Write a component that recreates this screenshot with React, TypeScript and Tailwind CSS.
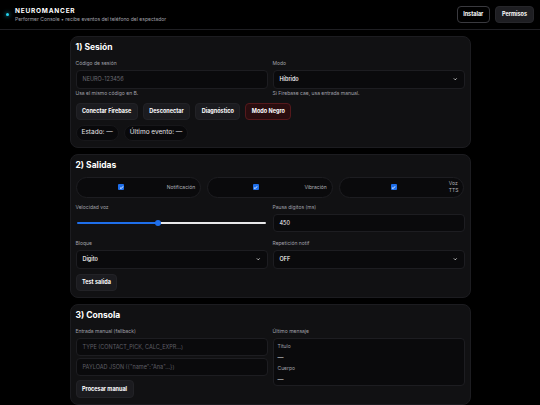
import { ChevronDown } from 'lucide-react'

const label = 'text-[5px] leading-[6px] text-[#a1a1aa]'
const field =
  'h-[19px] rounded-[4px] border border-[#1d1d21] bg-[#0a0a0c] px-[6px] flex items-center text-[5.5px]'
const btn =
  'h-[17px] px-[5.5px] rounded-[4px] border border-[#222226] bg-[#1b1b1f] text-[5.5px] font-bold text-white flex items-center'

function Card({ title, children }: { title: string; children: React.ReactNode }) {
  return (
    <section className="w-[401px] rounded-[8px] border border-[#1c1c20] bg-[#111113] px-[5px] pt-[5px] pb-[6px]">
      <h2 className="text-[8.5px] leading-[10px] font-bold text-white">{title}</h2>
      {children}
    </section>
  )
}

function FakeSelect({ value }: { value: string }) {
  return (
    <div className={`${field} justify-between font-medium text-white`}>
      <span>{value}</span>
      <ChevronDown className="w-[4.5px] h-[4.5px] text-white" strokeWidth={4} />
    </div>
  )
}

// checkbox toma el espacio libre, el texto se queda en su ancho mínimo
function Check({ text }: { text: string }) {
  return (
    <div className="h-[21.5px] rounded-full border border-[#1d1d21] bg-[#0a0a0c] pl-[2px] pr-[5px] flex items-center">
      <div className="flex-1 flex justify-center pr-[3px]">
        <span className="w-[6px] h-[6px] rounded-[1px] bg-[#1f6feb] flex items-center justify-center">
          <svg viewBox="0 0 10 10" className="w-[5px] h-[5px]">
            <path d="M2 5.2 L4.2 7.3 L8 2.8" stroke="white" strokeWidth="1.8" fill="none" />
          </svg>
        </span>
      </div>
      <span className="w-min text-[5px] leading-[7px] text-[#b4b4bb]">{text}</span>
    </div>
  )
}

export default function App() {
  return (
    <div className="min-h-screen bg-black text-white" style={{ fontFamily: 'Inter, "Noto Sans", sans-serif' }}>
      <header className="h-[30px] border-b border-[#1f1f23] flex items-center justify-between pl-[6px] pr-[6px]">
        <div className="flex items-center gap-[6px]">
          <span className="w-[3px] h-[3px] rounded-full bg-[#22d3ee] shadow-[0_0_4px_#22d3ee]" />
          <div>
            <div className="text-[6.5px] leading-[8px] font-bold tracking-[0.12em]">NEUROMANCER</div>
            <div className="text-[5px] leading-[6px] text-[#a1a1aa] mt-[1px]">
              Performer Console • recibe eventos del teléfono del espectador
            </div>
          </div>
        </div>
        <div className="flex gap-[5px]">
          <button className="h-[17px] px-[5.5px] rounded-[4px] border border-[#3a3a3f] bg-black text-[5.5px] font-bold">
            Instalar
          </button>
          <button className="h-[17px] px-[6px] rounded-[4px] border border-[#26262a] bg-[#1e1e22] text-[5.5px] font-bold">
            Permisos
          </button>
        </div>
      </header>

      <main className="flex flex-col items-center gap-[6px] pt-[6px]">
        <Card title="1) Sesión">
          <div className="mt-[8px] grid grid-cols-2 gap-x-[5px]">
            <div>
              <div className={label}>Código de sesión</div>
              <div className={`${field} mt-[4px] text-[#6b6b72]`}>NEURO-123456</div>
              <div className={`${label} mt-[0.5px]`}>Usa el mismo código en B.</div>
            </div>
            <div>
              <div className={label}>Modo</div>
              <div className="mt-[4px]">
                <FakeSelect value="Híbrido" />
              </div>
              <div className={`${label} mt-[0.5px]`}>Si Firebase cae, usa entrada manual.</div>
            </div>
          </div>
          <div className="mt-[7px] flex gap-[5px]">
            <button className={btn}>Conectar Firebase</button>
            <button className={btn}>Desconectar</button>
            <button className={btn}>Diagnóstico</button>
            <button className={`${btn} !bg-[#2a0d0f] !border-[#55191c]`}>Modo Negro</button>
          </div>
          <div className="mt-[5px] flex gap-[5px]">
            <span className="h-[16px] px-[5px] rounded-full border border-[#17171a] bg-[#09090b] flex items-center text-[6.5px] text-[#e4e4e7]">
              Estado: —
            </span>
            <span className="h-[16px] px-[5px] rounded-full border border-[#17171a] bg-[#09090b] flex items-center text-[6.5px] text-[#e4e4e7]">
              Último evento: —
            </span>
          </div>
        </Card>

        <Card title="2) Salidas">
          <div className="mt-[7px] grid grid-cols-3 gap-[6px]">
            <Check text="Notificación" />
            <Check text="Vibración" />
            <Check text="Voz TTS" />
          </div>
          <div className="mt-[6px] grid grid-cols-2 gap-x-[5px]">
            <div>
              <div className={label}>Velocidad voz</div>
              <div className="mt-[4px] h-[18px] flex items-center px-[1.5px]">
                <div className="relative w-full h-[2px] flex">
                  <div className="w-[43%] h-full bg-[#1f6feb] rounded-l-full" />
                  <div className="flex-1 h-full bg-[#e8e8ea] rounded-r-full" />
                  <span className="absolute left-[43%] top-1/2 -translate-x-1/2 -translate-y-1/2 w-[6px] h-[6px] rounded-full bg-[#1f6feb]" />
                </div>
              </div>
            </div>
            <div>
              <div className={label}>Pausa dígitos (ms)</div>
              <div className={`${field} mt-[4px] !h-[18px] text-white`}>450</div>
            </div>
          </div>
          <div className="mt-[8px] grid grid-cols-2 gap-x-[5px]">
            <div>
              <div className={label}>Bloque</div>
              <div className="mt-[4px]">
                <FakeSelect value="Dígito" />
              </div>
            </div>
            <div>
              <div className={label}>Repetición notif</div>
              <div className="mt-[4px]">
                <FakeSelect value="OFF" />
              </div>
            </div>
          </div>
          <button className={`${btn} mt-[5px]`}>Test salida</button>
        </Card>

        <Card title="3) Consola">
          <div className="mt-[8px] grid grid-cols-2 gap-x-[5px]">
            <div>
              <div className={label}>Entrada manual (fallback)</div>
              <div className={`${field} mt-[4px] !h-[18px] text-[#5f5f66]`}>TYPE (CONTACT_PICK, CALC_EXPR...)</div>
              <div className={`${field} mt-[2px] !h-[18px] text-[#5f5f66]`}>PAYLOAD JSON ({"{"}"name":"Ana"...{"}"})</div>
              <button className={`${btn} mt-[4px] !h-[18px]`}>Procesar manual</button>
            </div>
            <div>
              <div className={label}>Último mensaje</div>
              <div className="mt-[4px] h-[48px] rounded-[4px] border border-[#1d1d21] bg-[#0a0a0c] px-[4px] pt-[4px]">
                <div className={label}>Título</div>
                <div className="text-[6px] leading-[6px] mt-[5px] text-[#e4e4e7]">—</div>
                <div className={`${label} mt-[5px]`}>Cuerpo</div>
                <div className="text-[6px] leading-[6px] mt-[5px] text-[#e4e4e7]">—</div>
              </div>
            </div>
          </div>
        </Card>
      </main>
    </div>
  )
}
